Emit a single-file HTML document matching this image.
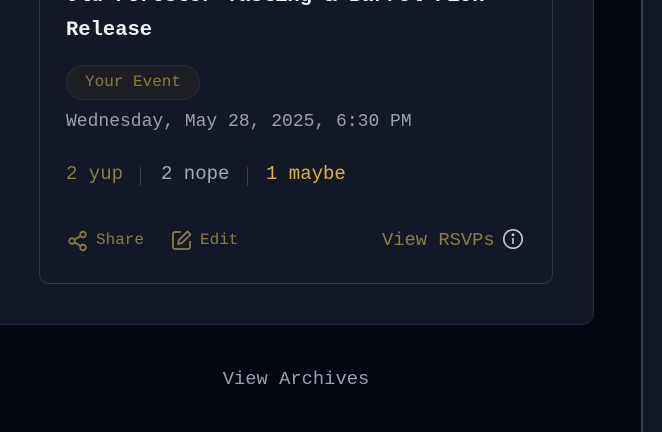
<!DOCTYPE html>
<html><head><meta charset="utf-8"><style>
*{margin:0;padding:0;box-sizing:border-box}
body{width:662px;height:432px;overflow:hidden;background:#03050f;position:relative;font-family:"Liberation Mono","DejaVu Sans Mono",monospace}
.right{position:absolute;left:641px;top:0;width:21px;height:432px;background:#111629;border-left:2px solid #3a3e4e}
.outer{position:absolute;left:-20px;top:-40px;width:614px;height:365px;background:#131826;border:1px solid #242a38;border-radius:12px}
.inner{position:absolute;left:39px;top:-40px;width:514px;height:324px;background:#131826;border:1.5px solid #2f3545;border-radius:10px}
.t{position:absolute;left:66px;color:#f2f2f2;font-weight:bold;font-size:20.5px;white-space:nowrap;line-height:24px}
.badge{position:absolute;left:66px;top:65px;width:134px;height:35px;border-radius:18px;background:#1c1e24;border:1px solid #2c2d2c;color:#8a7a3e;font-size:16px;line-height:33px;text-align:center}
.date{position:absolute;left:66px;top:112px;color:#9aa0ad;font-size:18px}
.rs{position:absolute;top:163px;font-size:19px;white-space:pre}
.act{position:absolute;top:230px;font-size:16px;color:#8b7d45}
.va{position:absolute;left:0;width:592px;top:368px;text-align:center;color:#9aa0ad;font-size:18.8px}
</style></head><body>
<div class="right"></div>
<div class="outer"></div>
<div class="inner"></div>
<div class="t" style="top:-15px">Old Forester Tasting &amp; Barrel Pick</div>
<div class="t" style="top:19px">Release</div>
<div class="badge">Your Event</div>
<div class="date">Wednesday, May 28, 2025, 6:30 PM</div>
<div class="rs" style="left:66px;color:#8b7d45">2 yup</div>
<div style="position:absolute;left:140px;top:167px;width:1px;height:19px;background:#3a3f4b"></div>
<div class="rs" style="left:161px;color:#a6abb6">2 nope</div>
<div style="position:absolute;left:247px;top:167px;width:1px;height:19px;background:#3a3f4b"></div>
<div class="rs" style="left:266px;color:#d9b33a">1 maybe</div>
<svg style="position:absolute;left:67px;top:230px" width="22" height="22" viewBox="0 0 22 22" fill="none" stroke="#8b7d45" stroke-width="1.8"><circle cx="16" cy="4.5" r="2.8"/><circle cx="5" cy="11" r="2.8"/><circle cx="16" cy="17.5" r="2.8"/><path d="M7.5 9.6L13.5 6M7.5 12.4L13.5 16"/></svg>
<div class="act" style="left:96px;top:231px">Share</div>
<svg style="position:absolute;left:171px;top:229px" width="22" height="22" viewBox="0 0 22 22" fill="none" stroke="#8b7d45" stroke-width="1.8" stroke-linejoin="round"><path d="M10 3H4a2 2 0 0 0-2 2v13a2 2 0 0 0 2 2h13a2 2 0 0 0 2-2v-6"/><path d="M16.5 2.5l3 3L11 14l-4 1 1-4z"/></svg>
<div class="act" style="left:200px;top:231px">Edit</div>
<div class="act" style="left:382px;top:229px;font-size:18.8px">View RSVPs</div>
<svg style="position:absolute;left:502px;top:228px" width="22" height="22" viewBox="0 0 22 22" fill="none" stroke="#c8ccd4" stroke-width="1.6"><circle cx="11" cy="11" r="9.2"/><path d="M11 10v6"/><circle cx="11" cy="6.8" r="0.6" fill="#c8ccd4"/></svg>
<div class="va">View Archives</div>
</body></html>
